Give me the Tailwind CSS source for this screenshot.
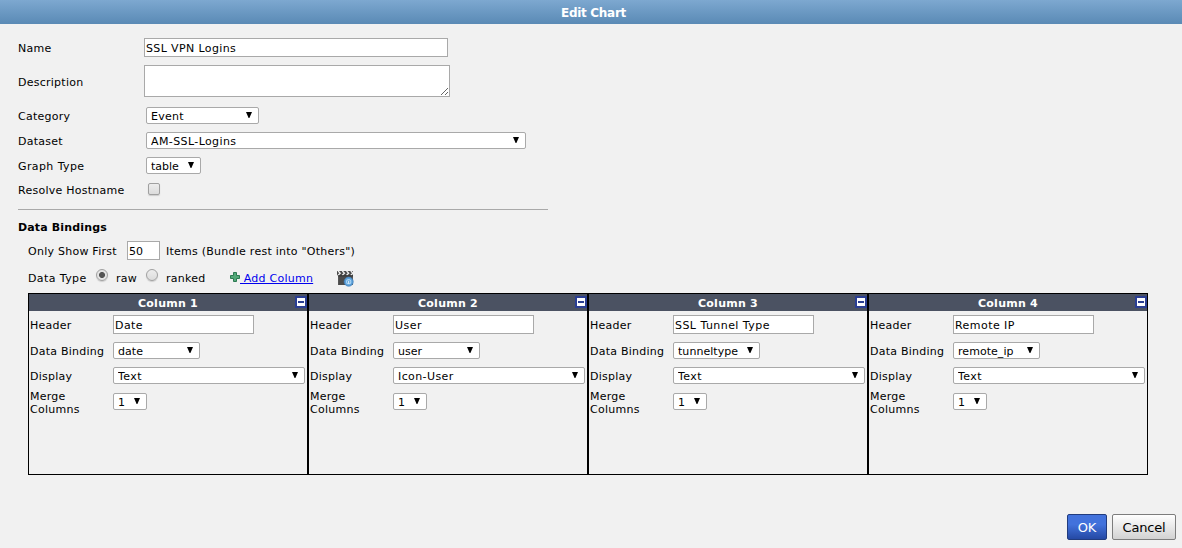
<!DOCTYPE html>
<html lang="en">

<head>
  <meta charset="UTF-8">
  <meta name="viewport" content="width=device-width, initial-scale=1.0">
  <title>Edit Chart</title>
  <script src="https://cdn.jsdelivr.net/npm/@tailwindcss/browser@4"></script>
</head>

<body class="bg-[#f1f1f1] text-black font-['DejaVu_Sans',Verdana,sans-serif] text-[11px] leading-[13px] tracking-[.25px] h-screen overflow-hidden">
  <header class="h-6 flex items-center justify-center bg-linear-to-b from-[#7da8d0] to-[#5a8ab5] text-white">
    <h1 class="font-bold text-xs tracking-[-.3px] pt-px pl-[5px]">Edit Chart</h1>
  </header>

  <form class="flex flex-col px-[18px]">
    <div class="flex items-center mt-3.5 h-[19px]">
      <label class="w-[126px] pt-px">Name</label>
      <input type="text" value="SSL VPN Logins" class="w-[304px] h-[19px] px-px pt-px tracking-[.38px] bg-white border border-[#a9a9a9]">
    </div>
    <div class="flex items-center mt-2 h-8">
      <label class="w-[126px] pt-0.5">Description</label>
      <div class="relative w-[306px] h-8">
        <textarea class="block w-full h-full resize-none bg-white border border-[#a9a9a9]"></textarea>
        <svg class="absolute right-[2px] bottom-[2px] w-[7px] h-[7px]" viewBox="0 0 7 7" fill="none" stroke="#555" stroke-width=".9">
          <path d="M0 7L7 0M4 7L7 4" />
        </svg>
      </div>
    </div>
    <div class="flex items-center mt-2.5 h-[17px]">
      <label class="w-32 pt-px">Category</label>
      <div class="relative w-[113px] h-[17px]">
        <select class="block appearance-none w-full h-full pl-1 pt-px bg-white border border-[#a9a9a9] rounded-xs"><option>Event</option></select>
        <svg class="absolute right-[7px] top-[5px] w-1.5 h-1.5" viewBox="0 0 6 6"><path d="M0 0H6L3.4 6H2.6Z" /></svg>
      </div>
    </div>
    <div class="flex items-center mt-2 h-[17px]">
      <label class="w-32 pt-px">Dataset</label>
      <div class="relative w-[380px] h-[17px]">
        <select class="block appearance-none w-full h-full pl-1 pt-px tracking-[.4px] bg-white border border-[#a9a9a9] rounded-xs"><option>AM-SSL-Logins</option></select>
        <svg class="absolute right-[7px] top-[5px] w-1.5 h-1.5" viewBox="0 0 6 6"><path d="M0 0H6L3.4 6H2.6Z" /></svg>
      </div>
    </div>
    <div class="flex items-center mt-2 h-[17px]">
      <label class="w-32 pt-px tracking-[.4px]">Graph Type</label>
      <div class="relative w-[55px] h-[17px]">
        <select class="block appearance-none w-full h-full pl-1 pt-px tracking-normal bg-white border border-[#a9a9a9] rounded-xs"><option>table</option></select>
        <svg class="absolute right-[7px] top-[5px] w-1.5 h-1.5" viewBox="0 0 6 6"><path d="M0 0H6L3.4 6H2.6Z" /></svg>
      </div>
    </div>
    <div class="flex items-center mt-[9px] h-3">
      <label class="w-[130px] pt-0.5">Resolve Hostname</label>
      <input type="checkbox" class="appearance-none w-3 h-3 rounded-xs border border-[#a0a0a0] bg-linear-to-b from-[#ededed] to-[#dcdcdc] shadow-[0_1px_1px_#ccc]">
    </div>

    <hr class="w-[530px] mt-3.5 border-0 h-px bg-[#a9a9a9]">

    <h2 class="mt-[10px] h-4 leading-4 font-bold tracking-[.15px]">Data Bindings</h2>

    <div class="pl-2.5">
      <div class="flex items-center mt-[5px] h-[19px]">
        <label class="w-[99px] pt-px">Only Show First</label>
        <input type="text" value="50" class="w-[33px] h-[19px] px-px pt-px tracking-normal bg-white border border-[#a9a9a9]">
        <span class="ml-1.5 pt-px whitespace-nowrap">Items (Bundle rest into "Others")</span>
      </div>
      <div class="flex items-center mt-[9px] h-[18px]">
        <label class="w-[68px] tracking-[.4px]">Data Type</label>
        <input type="radio" name="type" checked class="appearance-none w-3 h-3 mb-1.5 rounded-full border border-[#a0a0a0] bg-[radial-gradient(circle,#555_0_2.6px,#e4e4e4_3.4px)] shadow-[0_1px_1px_#ccc]">
        <label class="w-[38px] pl-2">raw</label>
        <input type="radio" name="type" class="appearance-none w-3 h-3 mb-1.5 rounded-full border border-[#a0a0a0] bg-linear-to-b from-[#ededed] to-[#dcdcdc] shadow-[0_1px_1px_#ccc]">
        <label class="w-[72px] pl-2">ranked</label>
        <a href="#" class="flex items-center w-[107px] text-[#0000ee] whitespace-nowrap">
          <svg class="w-2.5 h-2.5 shrink-0 mb-0.5" viewBox="0 0 10 10">
            <path d="M3.5.5H6.5V3.5H9.5V6.5H6.5V9.5H3.5V6.5H.5V3.5H3.5Z" fill="#53a878" stroke="#2c7a52" />
          </svg>
          <span class="underline whitespace-pre"> Add Column</span>
        </a>
        <svg class="w-[17px] h-[17px] shrink-0 mt-px" viewBox="0 0 16 16">
          <path d="M0 1H15V14H1V5H0Z" fill="#4b4b4b" />
          <path d="M1 1L3 3L1 5M5 1L7 3L5 5M9 1L11 3L9 5M13 1L15 3L13 5" fill="none" stroke="#eee" stroke-width="1.2" />
          <path d="M1 5.5H15" stroke="#333" />
          <circle cx="11" cy="11" r="4.3" fill="#5b9fd8" stroke="#3d7db8" stroke-width=".6" />
          <circle cx="11" cy="11" r="2" fill="none" stroke="#a8d4f4" />
          <path d="M11 10V13" stroke="#e5f4ff" />
        </svg>
      </div>

      <div id="columns" class="flex mt-1.5 w-[1120px] h-[182px]"></div>
    </div>
  </form>

  <footer class="flex justify-end gap-[5px] mt-[39px] pr-1.5 text-[13px] tracking-[-.2px]">
    <button class="w-10 h-[26px] rounded-xs border border-[#223c7e] bg-linear-to-b from-[#4272dc] from-40% to-[#2549a4] text-white">OK</button>
    <button class="w-16 h-[26px] rounded-xs border border-[#7d7d7d] bg-linear-to-b from-white to-[#d2d2d2]">Cancel</button>
  </footer>

  <script>
    const columns = [
      { header: "Date", binding: "date", display: "Text" },
      { header: "User", binding: "user", display: "Icon-User" },
      { header: "SSL Tunnel Type", binding: "tunneltype", display: "Text" },
      { header: "Remote IP", binding: "remote_ip", display: "Text" }
    ]
    const arrow = `<svg class="absolute right-[7px] top-[5px] w-1.5 h-1.5" viewBox="0 0 6 6"><path d="M0 0H6L3.4 6H2.6Z" /></svg>`
    let content = ""
    columns.forEach((col, i) => {
      content += `<section class="w-[280px] h-full border border-black">
        <div class="relative h-[17px] pt-px bg-[#4b5262] text-white text-center font-bold leading-[17px]">
          Column ${i + 1}
          <button type="button" class="absolute right-0 top-0.5 w-3 h-3 bg-[#2b3f93] p-0.5">
            <svg class="block w-2 h-2" viewBox="0 0 8 8"><path d="M0 0H8V8H0Z" fill="#fff" /><path d="M1 3H7V5H1Z" fill="#2b3f93" /></svg>
          </button>
        </div>
        <div class="flex items-center mt-1 h-[19px] pl-px">
          <label class="w-[83px] pt-px">Header</label>
          <input type="text" value="${col.header}" class="w-[141px] h-[19px] px-px pt-px tracking-[.45px] bg-white border border-[#a9a9a9]">
        </div>
        <div class="flex items-center mt-2 h-[17px] pl-px">
          <label class="w-[83px] pt-px whitespace-nowrap">Data Binding</label>
          <div class="relative w-[87px] h-[17px]">
            <select class="block appearance-none w-full h-full pl-1 pt-px tracking-[.05px] bg-white border border-[#a9a9a9] rounded-xs"><option>${col.binding}</option></select>
            ${arrow}
          </div>
        </div>
        <div class="flex items-center mt-2 h-[17px] pl-px">
          <label class="w-[83px] pt-px">Display</label>
          <div class="relative w-48 h-[17px]">
            <select class="block appearance-none w-full h-full pl-1 pt-px tracking-[.4px] bg-white border border-[#a9a9a9] rounded-xs"><option>${col.display}</option></select>
            ${arrow}
          </div>
        </div>
        <div class="flex items-center mt-[9px] h-[17px] pl-px">
          <label class="w-[83px] pt-0.5">Merge<br>Columns</label>
          <div class="relative w-[34px] h-[17px]">
            <select class="block appearance-none w-full h-full pl-1 pt-px bg-white border border-[#a9a9a9] rounded-xs"><option>1</option></select>
            ${arrow}
          </div>
        </div>
      </section>`
    })
    document.getElementById("columns").innerHTML = content
  </script>
</body>

</html>
